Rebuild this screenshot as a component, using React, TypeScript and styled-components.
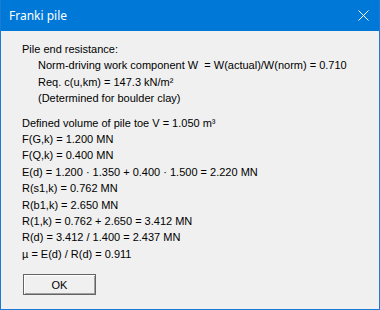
import React from 'react';
import styled, { createGlobalStyle } from 'styled-components';

const GlobalStyle = createGlobalStyle`
  html, body {
    margin: 0;
    padding: 0;
    background: #f0f0f0;
  }
`;

const Window = styled.div`
  width: 380px;
  height: 310px;
  box-sizing: border-box;
  border: 1px solid #1a7ad4;
  border-top: none;
  background: #f0f0f0;
  display: flex;
  flex-direction: column;
  overflow: hidden;
`;

const TitleBar = styled.div`
  height: 31px;
  background: #0078d7;
  display: flex;
  align-items: center;
  justify-content: space-between;
  padding: 0 9px 0 8px;
  flex-shrink: 0;
`;

const Title = styled.span`
  color: #ffffff;
  font-family: "Noto Sans", "Open Sans", sans-serif;
  font-size: 12px;
`;

const CloseButton = styled.div`
  width: 12px;
  height: 12px;
  display: flex;
  align-items: center;
  justify-content: center;
  margin-right: 1px;
`;

const Content = styled.div`
  padding: 10px 0 0 21px;
  font-family: "Liberation Sans", Arial, sans-serif;
  font-size: 11px;
  color: #000;
  display: flex;
  flex-direction: column;
`;

const Group = styled.div<{ $gap?: number }>`
  display: flex;
  flex-direction: column;
  margin-top: ${(p) => p.$gap ?? 0}px;
`;

const Line = styled.div<{ $indent?: boolean }>`
  line-height: 16.4px;
  height: 16.4px;
  white-space: pre;
  padding-left: ${(p) => (p.$indent ? 16 : 0)}px;
`;

const ButtonRow = styled.div`
  margin-top: 12px;
  display: flex;
`;

const OkButton = styled.button`
  width: 73px;
  height: 21px;
  box-sizing: border-box;
  background: #f0f0f0;
  border: 1px solid #646464;
  box-shadow: inset 1px 1px 0 #ffffff, inset -1px -1px 0 #a0a0a0;
  font-family: "Liberation Sans", Arial, sans-serif;
  font-size: 11px;
  color: #000;
  padding: 0;
  margin-left: 1px;
`;

const headLines = [
  'Norm-driving work component W  = W(actual)/W(norm) = 0.710',
  'Req. c(u,km) = 147.3 kN/m²',
  '(Determined for boulder clay)',
];

const resultLines = [
  'Defined volume of pile toe V = 1.050 m³',
  'F(G,k) = 1.200 MN',
  'F(Q,k) = 0.400 MN',
  'E(d) = 1.200 · 1.350 + 0.400 · 1.500 = 2.220 MN',
  'R(s1,k) = 0.762 MN',
  'R(b1,k) = 2.650 MN',
  'R(1,k) = 0.762 + 2.650 = 3.412 MN',
  'R(d) = 3.412 / 1.400 = 2.437 MN',
  'µ = E(d) / R(d) = 0.911',
];

const App: React.FC = () => {
  return (
    <>
      <GlobalStyle />
      <Window>
        <TitleBar>
          <Title>Franki pile</Title>
          <CloseButton>
            <svg width="11" height="11" viewBox="0 0 11 11">
              <path d="M0.5 0.5 L10.5 10.5 M10.5 0.5 L0.5 10.5" stroke="#ffffff" strokeWidth="1" />
            </svg>
          </CloseButton>
        </TitleBar>
        <Content>
          <Group>
            <Line>Pile end resistance:</Line>
            {headLines.map((l) => (
              <Line key={l} $indent>
                {l}
              </Line>
            ))}
          </Group>
          <Group $gap={8}>
            {resultLines.map((l) => (
              <Line key={l}>{l}</Line>
            ))}
          </Group>
          <ButtonRow>
            <OkButton>OK</OkButton>
          </ButtonRow>
        </Content>
      </Window>
    </>
  );
};

export default App;
